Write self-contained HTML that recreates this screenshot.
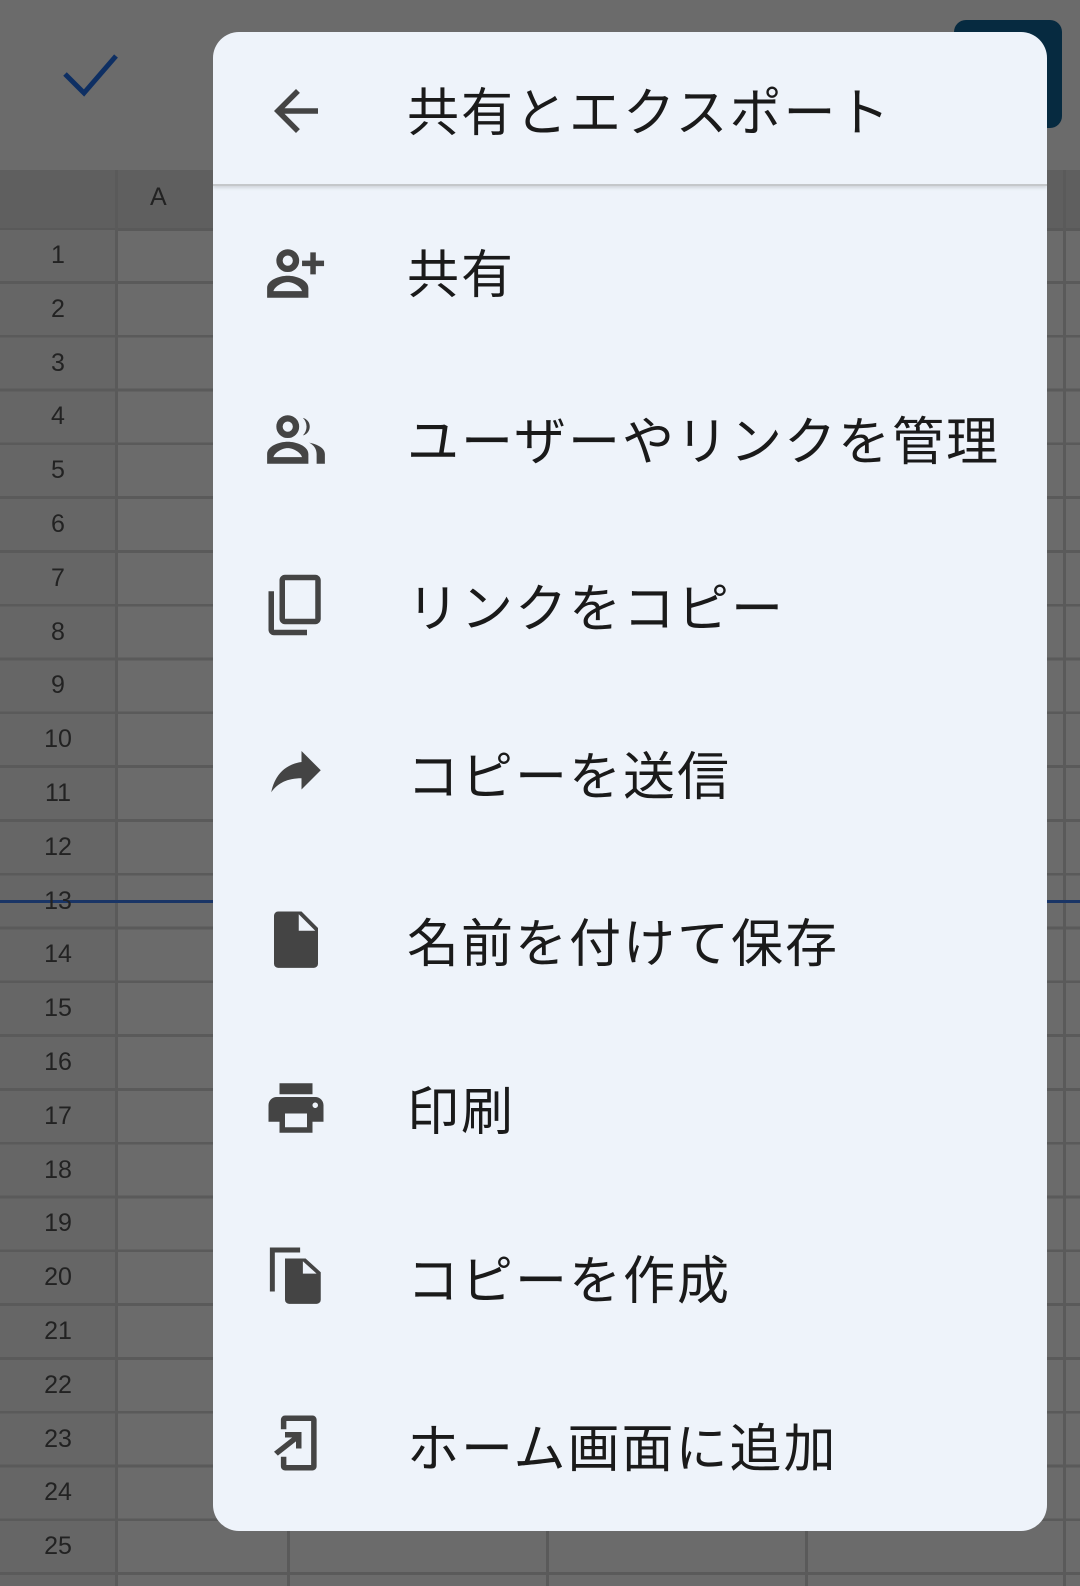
<!DOCTYPE html>
<html><head><meta charset="utf-8"><style>
html,body{margin:0;padding:0}
body{width:1080px;height:1586px;position:relative;overflow:hidden;background:#6b6b6b;font-family:"Liberation Sans","Noto Sans CJK JP",sans-serif}
.grid{position:absolute;left:0;top:230px;width:1080px;height:1356px;background:repeating-linear-gradient(to bottom,transparent 0,transparent 51px,#5a5a5a 51px,#5a5a5a 53.8px)}
.colhdr{position:absolute;left:0;top:170px;width:1080px;height:58px;background:#5f5f5f;border-bottom:3px solid #595959}
.vl{position:absolute;top:170px;bottom:0;width:3px;background:#5a5a5a}
.rh{position:absolute;left:0;top:230px;width:116px;bottom:0;background:#666}
.n{position:absolute;left:0;width:116px;text-align:center;font-size:25px;color:#222;line-height:30px}
.card{position:absolute;left:213px;top:32px;width:834px;height:1499px;background:#eef3fa;border-radius:26px;overflow:hidden}
.hdr{position:absolute;left:0;top:0;width:100%;height:152px;border-bottom:2px solid #c4c7ca;box-shadow:0 2px 3px rgba(0,0,0,.12)}
.t{position:absolute;left:194px;font-size:52px;color:#1a1a1a;line-height:60px;white-space:nowrap;letter-spacing:2px}
.ic{position:absolute;left:50px;width:66px;height:66px}
</style></head><body>
<svg style="position:absolute;left:60px;top:50px" width="60" height="50" viewBox="0 0 60 50"><path d="M5 24 L24 43 L56 6" fill="none" stroke="#0e2f63" stroke-width="5"/></svg>
<div style="position:absolute;left:954px;top:20px;width:108px;height:108px;background:#062a40;border-radius:12px"></div>
<div class="colhdr"></div>
<div class="rh"></div>
<div class="grid"></div>
<div class="vl" style="left:115px"></div>
<div class="vl" style="left:287px"></div>
<div class="vl" style="left:546px"></div>
<div class="vl" style="left:805px"></div>
<div class="vl" style="left:1063px"></div>
<div style="position:absolute;left:150px;top:183px;font-size:25px;color:#222">A</div>
<div style="position:absolute;left:0;top:900px;width:1080px;height:3px;background:#1a3566"></div>
<div class="n" style="top:240px">1</div><div class="n" style="top:294px">2</div><div class="n" style="top:348px">3</div><div class="n" style="top:401px">4</div><div class="n" style="top:455px">5</div><div class="n" style="top:509px">6</div><div class="n" style="top:563px">7</div><div class="n" style="top:617px">8</div><div class="n" style="top:670px">9</div><div class="n" style="top:724px">10</div><div class="n" style="top:778px">11</div><div class="n" style="top:832px">12</div><div class="n" style="top:886px">13</div><div class="n" style="top:939px">14</div><div class="n" style="top:993px">15</div><div class="n" style="top:1047px">16</div><div class="n" style="top:1101px">17</div><div class="n" style="top:1155px">18</div><div class="n" style="top:1208px">19</div><div class="n" style="top:1262px">20</div><div class="n" style="top:1316px">21</div><div class="n" style="top:1370px">22</div><div class="n" style="top:1424px">23</div><div class="n" style="top:1477px">24</div><div class="n" style="top:1531px">25</div>

<div class="card">
<div class="hdr"></div>
<svg class="ic" style="top:46px" viewBox="0 0 24 24"><path d="M20 11H7.83l5.59-5.59L12 4l-8 8 8 8 1.41-1.41L7.83 13H20v-2z" fill="#444"/></svg>
<div class="t" style="top:52px">共有とエクスポート</div>

<svg class="ic" style="top:208px" viewBox="0 0 24 24"><g fill="#444"><circle cx="9" cy="7.5" r="3" fill="none" stroke="#444" stroke-width="2.3"/><path d="M9 13c-3 0-7.5 1.5-7.5 4.5V21h15v-3.5C16.5 14.5 12 13 9 13zm-5.2 5.6c.3-1.4 2.8-3.3 5.2-3.3s4.9 1.9 5.2 3.3z"/><path d="M19.2 7.5V4.5h-2v3h-3v2h3v3h2v-3h3v-2z"/></g></svg>
<div class="t" style="top:214px">共有</div>

<svg class="ic" style="top:374px" viewBox="0 0 24 24"><g fill="#444"><circle cx="9" cy="7.5" r="3" fill="none" stroke="#444" stroke-width="2.3"/><path d="M9 13c-3 0-7.5 1.5-7.5 4.5V21h15v-3.5C16.5 14.5 12 13 9 13zm-5.2 5.6c.3-1.4 2.8-3.3 5.2-3.3s4.9 1.9 5.2 3.3z"/><path d="M14.5 4.3a3.3 3.3 0 0 1 0 6.4a4.5 4.5 0 0 0 0-6.4z"/><path d="M16.8 13.3c1.6.9 2.7 2.2 2.7 4.2V21h3v-3.5c0-2.3-2.8-3.6-5.7-4.2z"/></g></svg>
<div class="t" style="top:381px">ユーザーやリンクを管理</div>

<svg class="ic" style="top:540px" viewBox="0 0 24 24"><path d="M16 1H4c-1.1 0-2 .9-2 2v14h2V3h12V1zm3 4H8c-1.1 0-2 .9-2 2v14c0 1.1.9 2 2 2h11c1.1 0 2-.9 2-2V7c0-1.1-.9-2-2-2zm0 16H8V7h11v14z" fill="#444" transform="translate(0,24) scale(1,-1)"/></svg>
<div class="t" style="top:548px">リンクをコピー</div>

<svg class="ic" style="top:708px" viewBox="0 0 24 24"><path d="M14 8V4l7 7-7 7v-4.1c-5 0-8.5 1.6-11 5.1 1-5 4-10 11-11z" fill="#444"/></svg>
<div class="t" style="top:716px">コピーを送信</div>

<svg class="ic" style="top:874px" viewBox="0 0 24 24"><path d="M6 2h8l6 6v13a1.5 1.5 0 0 1-1.5 1.5h-13A1.5 1.5 0 0 1 4 21V3.5A1.5 1.5 0 0 1 5.5 2zM13 3v6h6z" fill="#444" fill-rule="evenodd"/></svg>
<div class="t" style="top:883px">名前を付けて保存</div>

<svg class="ic" style="top:1043px" viewBox="0 0 24 24"><path d="M19 8H5c-1.66 0-3 1.34-3 3v6h4v4h12v-4h4v-6c0-1.66-1.34-3-3-3zm-3 11H8v-5h8v5zm3-7c-.55 0-1-.45-1-1s.45-1 1-1 1 .45 1 1-.45 1-1 1zm-1-9H6v4h12V3z" fill="#444"/></svg>
<div class="t" style="top:1051px">印刷</div>

<svg class="ic" style="top:1210px" viewBox="0 0 24 24"><g fill="#444"><path d="M2.5 2h11v1.8H4.3V18H2.5z"/><path d="M8 6h7.5l5.5 5v10a1.5 1.5 0 0 1-1.5 1.5h-10A1.5 1.5 0 0 1 8 21zM14.5 7v4.5h5z" fill-rule="evenodd"/></g></svg>
<div class="t" style="top:1220px">コピーを作成</div>

<svg class="ic" style="top:1378px" viewBox="0 0 24 24"><g fill="#444"><path d="M8 2h10a1.5 1.5 0 0 1 1.5 1.5v17A1.5 1.5 0 0 1 18 22H8a1.5 1.5 0 0 1-1.5-1.5V17h2v3h9V4h-9v3h-2V3.5A1.5 1.5 0 0 1 8 2z"/><path d="M8 8h6v6h-2v-2.6L5.4 16.6 4 15.2 10.6 10H8z"/></g></svg>
<div class="t" style="top:1388px">ホーム画面に追加</div>
</div>
</body></html>
